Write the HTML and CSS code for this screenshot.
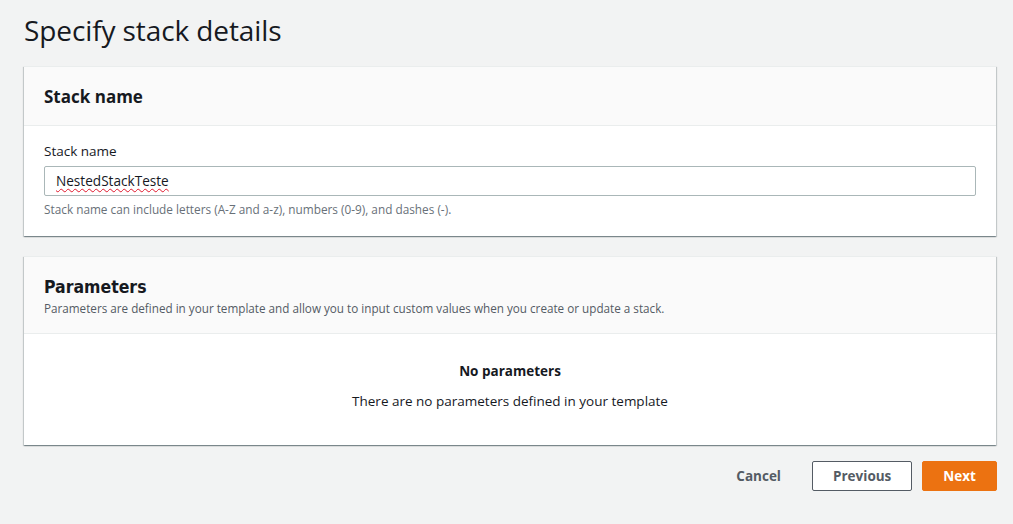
FILE: index.html
```html
<!DOCTYPE html>
<html lang="en">
<head>
<meta charset="utf-8">
<title>Specify stack details</title>
<link rel="stylesheet" href="styles.css">
</head>
<body>
<main class="page">
  <h1 class="page-title">Specify stack details</h1>

  <section class="card">
    <header class="card-header">
      <h2 class="card-title">Stack name</h2>
    </header>
    <div class="card-body">
      <label class="field-label" for="stackName">Stack name</label>
      <div class="input"><span class="misspelled">NestedStackTeste</span></div>
      <p class="field-hint">Stack name can include letters (A-Z and a-z), numbers (0-9), and dashes (-).</p>
    </div>
  </section>

  <section class="card card-last">
    <header class="card-header card-header-params">
      <h2 class="card-title condensed">Parameters</h2>
      <p class="card-desc">Parameters are defined in your template and allow you to input custom values when you create or update a stack.</p>
    </header>
    <div class="card-body empty">
      <p class="empty-title">No parameters</p>
      <p class="empty-text">There are no parameters defined in your template</p>
    </div>
  </section>

  <div class="actions">
    <button class="btn btn-link">Cancel</button>
    <button class="btn btn-normal">Previous</button>
    <button class="btn btn-primary">Next</button>
  </div>
</main>
</body>
</html>
```

FILE: styles.css
```css
* { box-sizing: border-box; }

html, body {
  margin: 0;
  padding: 0;
  background: #f2f3f3;
}

body {
  font-family: "Open Sans", "Noto Sans", "Liberation Sans", sans-serif;
  color: #16191f;
  font-size: 14px;
}

.page {
  padding: 12px 16px 0 24px;
}

.page-title {
  margin: 0 0 18px 0;
  font-size: 28px;
  font-weight: 400;
  line-height: 36px;
  color: #16191f;
  letter-spacing: -0.1px;
}

.card {
  background: #fff;
  box-shadow: 0 1px 1px 0 rgba(0, 28, 36, 0.3), 1px 1px 1px 0 rgba(0, 28, 36, 0.15), -1px 1px 1px 0 rgba(0, 28, 36, 0.15);
  border-top: 1px solid #eaeded;
  margin-bottom: 20px;
  margin-right: 1px;
}

.card-last {
  margin-bottom: 16px;
}

.card-header {
  background: #fafafa;
  border-bottom: 1px solid #eaeded;
  padding: 19px 20px 17px 20px;
}

.card-title {
  margin: 0;
  font-size: 17px;
  font-weight: 700;
  line-height: 22px;
  color: #16191f;
}

.card-header-params {
  padding: 19px 20px 17px 20px;
}

.condensed {
  font-family: "DejaVu Sans Condensed", "Open Sans", sans-serif;
  font-stretch: condensed;
  font-size: 17.5px;
}

.card-desc {
  margin: 2px 0 0 0;
  font-size: 11.7px;
  line-height: 16px;
  color: #545b64;
}

.card-body {
  padding: 15px 20px 18px 20px;
}

.field-label {
  display: block;
  font-size: 13.5px;
  line-height: 20px;
  color: #16191f;
  margin-bottom: 5px;
}

.input {
  height: 30px;
  border: 1px solid #aab7b8;
  border-radius: 2px;
  background: #fff;
  padding: 0 11px;
  font-size: 13.6px;
  line-height: 28px;
  color: #16191f;
}

.misspelled {
  text-decoration: underline wavy #e0162b;
  text-decoration-thickness: 1px;
  text-underline-offset: 2px;
}

.field-hint {
  margin: 4px 0 0 0;
  font-size: 11.8px;
  line-height: 18px;
  color: #687078;
}

.card-body.empty {
  text-align: center;
  padding: 27px 20px 34px 20px;
}

.empty-title {
  margin: 0;
  font-size: 13.5px;
  font-weight: 700;
  line-height: 20px;
}

.empty-text {
  margin: 10px 0 0 0;
  font-size: 13.5px;
  line-height: 20px;
}

.actions {
  display: flex;
  justify-content: flex-end;
  align-items: center;
  gap: 10px;
}

.btn {
  font-family: "Open Sans", "Noto Sans", sans-serif;
  font-size: 13.5px;
  font-weight: 700;
  height: 30px;
  border-radius: 2px;
  padding: 0 20px;
  cursor: pointer;
}

.btn-link {
  background: transparent;
  border: 1px solid transparent;
  color: #545b64;
  margin-right: 0;
}

.btn-normal {
  background: #fff;
  border: 1px solid #545b64;
  color: #545b64;
  width: 100px;
}

.btn-primary {
  background: #ec7211;
  border: 1px solid #ec7211;
  color: #fff;
  width: 75px;
}
```
